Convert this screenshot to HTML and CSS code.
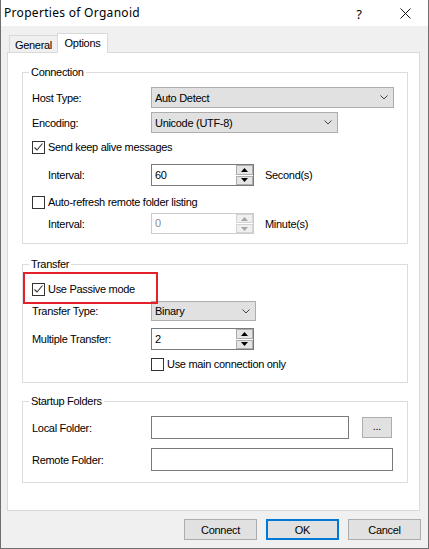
FILE: index.html
```html
<!DOCTYPE html>
<html>
<head>
<meta charset="utf-8">
<title>Properties of Organoid</title>
<link rel="stylesheet" href="styles.css">
</head>
<body>
<div class="window">
  <div class="titlebar">
    <span class="title">Properties of Organoid</span>
    <span class="cap-btn help">?</span>
    <span class="cap-btn close"><svg width="11" height="11" viewBox="0 0 11 11"><path d="M0.5 0.5 L10.5 10.5 M10.5 0.5 L0.5 10.5" stroke="#111" stroke-width="1" fill="none"/></svg></span>
  </div>
  <div class="body">
    <div class="tabs">
      <div class="tab">General</div>
      <div class="tab active">Options</div>
    </div>
    <div class="panel">
      <div class="group g-conn">
        <div class="group-title">Connection</div>
        <div class="row mt8">
          <span class="label">Host Type:</span>
          <div class="combo w243 h21"><span>Auto Detect</span><svg class="chev" width="8" height="5" viewBox="0 0 8 5"><polyline points="0.5,0.5 4,4 7.5,0.5" stroke="#444" fill="none"/></svg></div>
        </div>
        <div class="row mt4">
          <span class="label">Encoding:</span>
          <div class="combo w187 h21"><span>Unicode (UTF-8)</span><svg class="chev" width="8" height="5" viewBox="0 0 8 5"><polyline points="0.5,0.5 4,4 7.5,0.5" stroke="#444" fill="none"/></svg></div>
        </div>
        <div class="row mt8">
          <span class="check on"><svg width="11" height="11" viewBox="0 0 11 11"><polyline points="1.5,5.5 4,8 9.5,1.5" stroke="#333" stroke-width="1.1" fill="none"/></svg></span>
          <span class="check-text">Send keep alive messages</span>
        </div>
        <div class="row mt10">
          <span class="label indent">Interval:</span>
          <div class="spin h22"><span class="spin-val">60</span>
            <div class="spin-btns"><span class="sb"><svg width="7" height="4" viewBox="0 0 7 4"><polygon points="3.5,0 7,4 0,4" fill="#000"/></svg></span><span class="sb"><svg width="7" height="4" viewBox="0 0 7 4"><polygon points="0,0 7,0 3.5,4" fill="#000"/></svg></span></div>
          </div>
          <span class="unit">Second(s)</span>
        </div>
        <div class="row mt10">
          <span class="check"></span>
          <span class="check-text">Auto-refresh remote folder listing</span>
        </div>
        <div class="row mt4">
          <span class="label indent">Interval:</span>
          <div class="spin h21 disabled"><span class="spin-val">0</span>
            <div class="spin-btns"><span class="sb"><svg width="7" height="4" viewBox="0 0 7 4"><polygon points="3.5,0 7,4 0,4" fill="#a6a6a6"/></svg></span><span class="sb"><svg width="7" height="4" viewBox="0 0 7 4"><polygon points="0,0 7,0 3.5,4" fill="#a6a6a6"/></svg></span></div>
          </div>
          <span class="unit">Minute(s)</span>
        </div>
      </div>

      <div class="group g-transfer">
        <div class="group-title">Transfer</div>
        <div class="row mt12 highlight">
          <span class="check on"><svg width="11" height="11" viewBox="0 0 11 11"><polyline points="1.5,5.5 4,8 9.5,1.5" stroke="#333" stroke-width="1.1" fill="none"/></svg></span>
          <span class="check-text">Use Passive mode</span>
        </div>
        <div class="row mt5">
          <span class="label">Transfer Type:</span>
          <div class="combo w105 h20"><span>Binary</span><svg class="chev" width="8" height="5" viewBox="0 0 8 5"><polyline points="0.5,0.5 4,4 7.5,0.5" stroke="#444" fill="none"/></svg></div>
        </div>
        <div class="row mt7">
          <span class="label">Multiple Transfer:</span>
          <div class="spin h22"><span class="spin-val">2</span>
            <div class="spin-btns"><span class="sb"><svg width="7" height="4" viewBox="0 0 7 4"><polygon points="3.5,0 7,4 0,4" fill="#000"/></svg></span><span class="sb"><svg width="7" height="4" viewBox="0 0 7 4"><polygon points="0,0 7,0 3.5,4" fill="#000"/></svg></span></div>
          </div>
        </div>
        <div class="row mt8 offset">
          <span class="check"></span>
          <span class="check-text">Use main connection only</span>
        </div>
      </div>

      <div class="group g-startup">
        <div class="group-title">Startup Folders</div>
        <div class="row mt8">
          <span class="label">Local Folder:</span>
          <div class="text w198 h23"></div>
          <div class="btn small">...</div>
        </div>
        <div class="row mt9">
          <span class="label">Remote Folder:</span>
          <div class="text w242 h23"></div>
        </div>
      </div>
    </div>
    <div class="buttons">
      <div class="btn">Connect</div>
      <div class="btn default">OK</div>
      <div class="btn">Cancel</div>
    </div>
  </div>
</div>
</body>
</html>
```

FILE: styles.css
```css
* { box-sizing: border-box; }
html, body { margin: 0; padding: 0; background: #fff; }
body {
  font-family: "Liberation Sans", Arial, sans-serif;
  font-size: 11px;
  letter-spacing: -0.3px;
  color: #000;
}
.window {
  width: 429px;
  height: 549px;
  border: 1px solid #6f6f6f;
  border-top: none;
  display: flex;
  flex-direction: column;
  background: #f0f0f0;
}
.titlebar {
  height: 26px;
  background: #fff;
  display: flex;
  align-items: center;
  flex-shrink: 0;
}
.title {
  font-family: "Noto Sans", "Open Sans", sans-serif;
  font-size: 12px;
  letter-spacing: 0.3px;
  padding-left: 3px;
  line-height: 26px;
  flex: 1;
}
.cap-btn {
  width: 46px;
  height: 26px;
  display: flex;
  align-items: center;
  justify-content: center;
}
.help {
  font-family: "Noto Sans", sans-serif;
  font-size: 13px;
  letter-spacing: 0;
  padding-top: 1px;
}
.close svg { display: block; margin-top: 1px; }
.body {
  flex: 1;
  padding: 7px 7px 0 6px;
  display: flex;
  flex-direction: column;
}
.tabs {
  height: 19px;
  display: flex;
  align-items: flex-end;
  padding-left: 2px;
}
.tab {
  height: 17px;
  width: 48px;
  border-top: 1px solid #d9d9d9;
  border-left: 1px solid #d9d9d9;
  display: flex;
  align-items: center;
  justify-content: center;
  padding-top: 1px;
}
.tab.active {
  position: relative;
  z-index: 1;
  width: 51px;
  height: 20px;
  margin-bottom: -1px;
  background: #fff;
  border-right: 1px solid #d9d9d9;
  padding-top: 0;
  padding-bottom: 1px;
}
.panel {
  width: 413px;
  height: 459px;
  border: 1px solid #d9d9d9;
  background: #fff;
  padding-left: 14px;
  padding-top: 19px;
}
.group {
  width: 386px;
  border: 1px solid #dcdcdc;
  padding-left: 9px;
}
.g-conn { padding-bottom: 9px; }
.g-transfer { margin-top: 20px; padding-bottom: 11px; }
.g-startup { margin-top: 18px; padding-bottom: 11px; }
.group-title {
  margin: -7px 0 0 -3px;
  padding: 0 2px;
  background: #fff;
  width: max-content;
  line-height: 13px;
  height: 13px;
}
.row {
  display: flex;
  align-items: center;
}
.mt4 { margin-top: 4px; }
.mt5 { margin-top: 5px; }
.mt7 { margin-top: 7px; }
.mt8 { margin-top: 8px; }
.mt9 { margin-top: 9px; }
.mt10 { margin-top: 10px; }
.mt12 { margin-top: 12px; }
.label {
  width: 119px;
  flex-shrink: 0;
}
.label.indent { padding-left: 16px; }
.row.offset { padding-left: 119px; }
.h20 { height: 20px; }
.h21 { height: 21px; }
.h22 { height: 22px; }
.h23 { height: 23px; }
.w243 { width: 243px; }
.w242 { width: 242px; }
.w187 { width: 187px; }
.w105 { width: 105px; }
.w198 { width: 198px; }
.combo {
  border: 1px solid #adadad;
  background: #e1e1e1;
  display: flex;
  align-items: center;
  justify-content: space-between;
  padding: 0 5px 0 3px;
}
.chev { display: block; }
.check {
  width: 13px;
  height: 13px;
  border: 1px solid #333;
  background: #fff;
  flex-shrink: 0;
  display: flex;
  align-items: center;
  justify-content: center;
}
.check svg { display: block; }
.check-text { margin-left: 3px; line-height: 13px; }
.spin {
  width: 103px;
  border: 1px solid #7a7a7a;
  background: #fff;
  display: flex;
  align-items: stretch;
  padding-right: 0;
}
.spin-val {
  flex: 1;
  padding-left: 3px;
  display: flex;
  align-items: center;
  padding-bottom: 1px;
}
.spin-btns {
  width: 17px;
  display: flex;
  flex-direction: column;
  gap: 1px;
  padding: 0;
}
.sb {
  flex: 1;
  border: 1px solid #adadad;
  background: #e5e5e5;
  display: flex;
  align-items: center;
  justify-content: center;
}
.sb svg { display: block; }
.spin.disabled { border-color: #cccccc; }
.spin.disabled .spin-val { color: #8a8a8a; }
.spin.disabled .sb { border-color: #d4d4d4; background: #efefef; }
.unit { margin-left: 11px; }
.highlight { position: relative; }
.highlight::after {
  content: "";
  position: absolute;
  left: -9px;
  top: -11px;
  width: 131px;
  height: 28px;
  border: 2px solid #e4202c;
}
.text {
  border: 1px solid #7a7a7a;
  background: #fff;
}
.btn {
  width: 73px;
  height: 21px;
  border: 1px solid #adadad;
  background: #e1e1e1;
  display: flex;
  align-items: center;
  justify-content: center;
}
.btn.default { border: 2px solid #0078d7; }
.btn.small {
  width: 30px;
  margin-left: 13px;
  padding-bottom: 3px;
}
.buttons {
  display: flex;
  justify-content: flex-end;
  gap: 9px;
  margin-top: 8px;
}
```
